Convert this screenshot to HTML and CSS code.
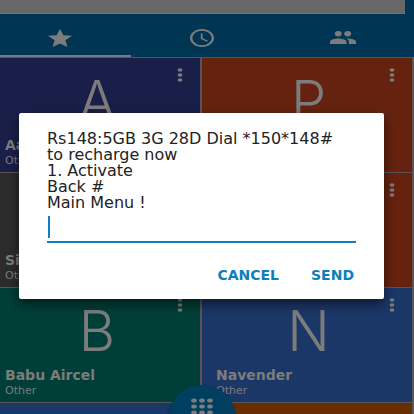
FILE: index.html
```
<!DOCTYPE html>
<html lang="en">
<head>
<meta charset="utf-8">
<meta name="viewport" content="width=device-width, initial-scale=1">
<title>Phone</title>
<link rel="stylesheet" href="styles.css">
</head>
<body>
<svg width="0" height="0" class="defs" aria-hidden="true">
  <symbol id="more" viewBox="0 0 6 14"><ellipse cx="3" cy="2" rx="2.4" ry="1.8"/><ellipse cx="3" cy="7" rx="2.4" ry="1.8"/><ellipse cx="3" cy="12" rx="2.4" ry="1.8"/></symbol>
</svg>
<div class="app">
  <header class="top">
    <div class="search"></div>
    <nav class="tabs">
      <button class="tab active" aria-label="Favorites"><svg width="24" height="18" viewBox="2 2 20 19" preserveAspectRatio="none"><path d="M12 17.27 18.18 21l-1.64-7.03L22 9.24l-7.19-.61L12 2 9.19 8.63 2 9.24l5.46 4.73L5.82 21z"/></svg></button>
      <button class="tab" aria-label="Recents"><svg width="24" height="18" viewBox="2 2 20 20" preserveAspectRatio="none"><path d="M11.99 2C6.47 2 2 6.48 2 12s4.47 10 9.99 10C17.52 22 22 17.52 22 12S17.52 2 11.99 2zM12 20c-4.42 0-8-3.58-8-8s3.58-8 8-8 8 3.58 8 8-3.58 8-8 8zm.5-13H11v6l5.25 3.15.75-1.23-4.5-2.67z"/></svg></button>
      <button class="tab" aria-label="Contacts"><svg width="26" height="13" viewBox="1 5 22 14" preserveAspectRatio="none"><path d="M16 11c1.66 0 2.99-1.34 2.99-3S17.66 5 16 5s-3 1.34-3 3 1.34 3 3 3zm-8 0c1.66 0 2.99-1.34 2.99-3S9.66 5 8 5 5 6.34 5 8s1.34 3 3 3zm0 2c-2.33 0-7 1.17-7 3.500V19h14v-2.500c0-2.330-4.670-3.500-7-3.500zm8 0c-.29 0-.62.02-.97.05 1.160.840 1.970 1.970 1.970 3.450V19h6v-2.500c0-2.330-4.670-3.500-7-3.500z"/></svg></button>
    </nav>
  </header>
  <main class="grid">
    <article class="tile indigo"><button class="more" aria-label="More"><svg width="6" height="14"><use href="#more"/></svg></button><div class="letter">A</div><h2>Aa</h2><p>Other</p></article>
    <article class="tile rust"><button class="more" aria-label="More"><svg width="6" height="14"><use href="#more"/></svg></button><div class="letter">P</div></article>
    <article class="tile grey"><h2>Si</h2><p>Other</p></article>
    <article class="tile rust"><button class="more" aria-label="More"><svg width="6" height="14"><use href="#more"/></svg></button></article>
    <article class="tile teal"><button class="more" aria-label="More"><svg width="6" height="14"><use href="#more"/></svg></button><div class="letter">B</div><h2>Babu Aircel</h2><p>Other</p></article>
    <article class="tile blue"><button class="more" aria-label="More"><svg width="6" height="14"><use href="#more"/></svg></button><div class="letter">N</div><h2>Navender</h2><p>Other</p></article>
    <article class="tile blue"></article>
    <article class="tile orange"></article>
  </main>
  <button class="dial" aria-label="Dialpad"><svg width="24" height="18" viewBox="0 0 24 18"><g><ellipse cx="4" cy="2.500" rx="2.800" ry="2"/><ellipse cx="12" cy="2.500" rx="2.800" ry="2"/><ellipse cx="20" cy="2.500" rx="2.800" ry="2"/><ellipse cx="4" cy="8.500" rx="2.800" ry="2"/><ellipse cx="12" cy="8.500" rx="2.800" ry="2"/><ellipse cx="20" cy="8.500" rx="2.800" ry="2"/><ellipse cx="4" cy="14.500" rx="2.800" ry="2"/><ellipse cx="12" cy="14.500" rx="2.800" ry="2"/><ellipse cx="20" cy="14.500" rx="2.800" ry="2"/></g></svg></button>
  <form class="dialog" role="dialog" aria-labelledby="msg">
    <label id="msg" for="reply">Rs148:5GB 3G 28D Dial *150*148#<br>to recharge now<br>1. Activate<br>Back #<br>Main Menu !</label>
    <div class="field"><span class="caret"></span><input id="reply" type="text"></div>
    <div class="actions"><button type="button">CANCEL</button><button type="button">SEND</button></div>
  </form>
</div>
</body>
</html>
```
FILE: styles.css
```
* { box-sizing: border-box; }
body { margin: 0; font-family: "DejaVu Sans", sans-serif; }
button { border: 0; padding: 0; background: none; font: inherit; color: inherit; }
svg { display: block; fill: currentColor; }
.defs { position: absolute; }
.app { position: relative; height: 100vh; overflow: hidden; color: #7c7c7c; background: #5b5558; }
.top { background: #003654; }
.search { height: 14px; margin-right: 9px; background: #686868; border-bottom: 1px solid #737373; }
.tabs { display: grid; grid-template-columns: 131fr 152fr 131fr; height: 43px; }
.tab { display: flex; align-items: center; justify-content: center; padding-top: 6px; border-bottom: 2px solid transparent; }
.tab:first-child { padding-right: 11px; }
.tab:nth-child(2) { padding-right: 10px; }
.tab:last-child { padding-left: 0; padding-right: 11px; }
.tab.active { border-color: #747b7e; }
.grid { display: grid; grid-template-columns: 201fr 211fr; grid-auto-rows: 114px; gap: 1px 2px; padding: 1px 2px 0 0; }
.tile { position: relative; padding: 13px 5px 0; }
.tile:nth-child(even) { padding-left: 14px; }
.indigo { background: #1a1f4a; }
.rust { background: #65230f; }
.grey { background: #2c2c2c; }
.teal { background: #003f37; }
.blue { background: #1b3768; }
.orange { background: #682e00; }
.more { position: absolute; top: 10px; right: 17px; }
.letter { height: 60px; line-height: 60px; padding-right: 6px; font-family: Inter, sans-serif; font-size: 56px; font-weight: 300; text-align: center; }
.tile h2 { margin: 5px 0 0; font-size: 14px; line-height: 18px; font-weight: 700; }
.tile p { margin: 0; font-size: 11px; line-height: 14px; }
.grey h2 { margin-top: 65px; }
.dial { position: absolute; left: 50%; bottom: -39px; width: 68px; height: 68px; margin-left: -39px; border-radius: 50%; background: #003f60; box-shadow: 0 1px 3px rgba(0,0,0,.4); display: flex; justify-content: center; padding-top: 13px; }
.dialog { position: absolute; top: 113px; left: 19px; right: 30px; padding: 18px 28px 14px; background: #fff; border-radius: 2px; box-shadow: 0 5px 12px rgba(0,0,0,.55); color: #222; }
.dialog label { display: block; font-size: 16px; line-height: 16px; }
.field { display: flex; align-items: center; height: 32px; border-bottom: 2px solid #0c80c3; }
.caret { width: 2px; height: 22px; margin: 2px 0 0 1px; background: #0c80c3; }
.field input { flex: 1; min-width: 0; height: 24px; border: 0; outline: 0; background: transparent; font: inherit; }
.actions { display: flex; justify-content: flex-end; gap: 32px; margin-top: 22px; padding-right: 2px; color: #0c80bd; font-size: 14px; line-height: 20px; font-weight: 700; }
```
